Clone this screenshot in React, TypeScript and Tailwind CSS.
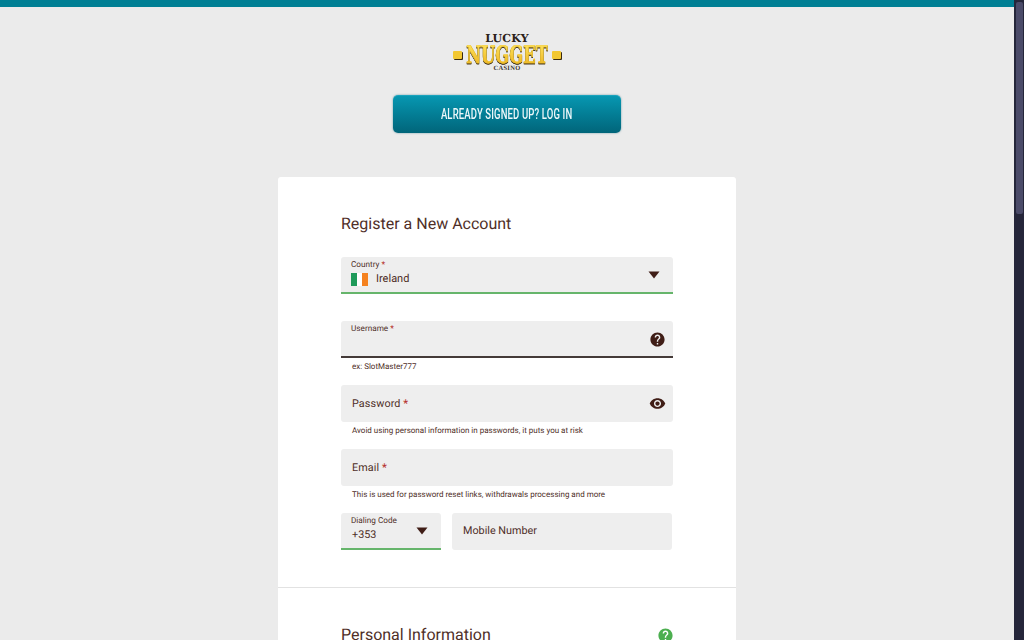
import { ReactNode } from "react";
import { MdHelp, MdVisibility } from "react-icons/md";

const Caret = () => (
  <svg width="12" height="8" viewBox="0 0 12 8" className="shrink-0">
    <polygon points="0.5,0.5 11.5,0.5 6,7.5" fill="#3f1d16" />
  </svg>
);

const Req = () => <span className="font-medium text-[#b5302a]"> *</span>;

const Logo = () => (
  <div className="flex h-[38px] w-[108px] flex-col items-center">
    <div className="h-[10px] font-['DejaVu_Serif'] text-[11px] leading-[10px] font-bold tracking-[0.2px] text-[#2b2118]">
      LUCKY
    </div>
    <div className="flex h-[21px] w-full items-center justify-between">
      <span className="h-[8px] w-[9px] rounded-[1px] bg-[#f2c731] shadow-[1px_1px_0_#3a2a10]" />
      <div className="flex w-[82px] justify-center">
        <span className="shrink-0 scale-x-[0.68] bg-gradient-to-b from-[#fde35a] to-[#eeb51f] bg-clip-text font-['DejaVu_Serif'] text-[24px] leading-[21px] font-bold whitespace-nowrap text-transparent drop-shadow-[0_1.5px_0_#3a2a10] [-webkit-text-stroke:0.5px_#f2c731]">
          NUGGET
        </span>
      </div>
      <span className="h-[8px] w-[9px] rounded-[1px] bg-[#f2c731] shadow-[1px_1px_0_#3a2a10]" />
    </div>
    <div className="mt-[1px] h-[6px] font-['Liberation_Serif'] text-[6.5px] leading-[6px] font-bold tracking-[0.3px] text-[#3a332c]">
      CASINO
    </div>
  </div>
);

type FieldProps = {
  label?: string;
  value?: ReactNode;
  hint?: string;
  right?: ReactNode;
  rightPad?: string;
  border?: string;
};

// filled input, floating label when there is a value or the field is active
const Field = ({ label, value, hint, right, rightPad = "pr-[7px]", border }: FieldProps) => (
  <div className="h-16">
    <div
      className={`flex h-[37px] items-center justify-between rounded-t-[3px] bg-[#eeeeee] pl-[10px] ${rightPad} ${
        border ? `border-b-2 ${border}` : "rounded-b-[3px]"
      }`}
    >
      {value !== undefined ? (
        <div className="flex h-full flex-col pt-[2px]">
          <span className="text-[8.2px] leading-[12px]">
            {label}
            <Req />
          </span>
          <div className="text-[11px] leading-[16px]">{value}</div>
        </div>
      ) : (
        <span className="pt-[1px] pl-[1px] text-[10.8px] tracking-[0.1px]">
          {label}
          <Req />
        </span>
      )}
      {right}
    </div>
    {hint && <p className="mt-[3px] pl-[11px] text-[8px] leading-[12px]">{hint}</p>}
  </div>
);

export default function App() {
  return (
    <div className="flex h-screen overflow-hidden bg-[#ebebeb] font-['Roboto',sans-serif] text-[#4f2f28] [text-rendering:geometricPrecision]">
      <main className="flex min-w-0 flex-1 flex-col items-center">
        <div className="h-[7px] w-full shrink-0 bg-[#007f94]" />
        <div className="mt-[27px] shrink-0">
          <Logo />
        </div>
        <button className="mt-[23px] flex h-[38px] w-[228px] shrink-0 items-center justify-center rounded-[5px] border-t border-[#1ba3bd] bg-gradient-to-b from-[#0797b1] to-[#01657a] shadow-[0_0_2px_rgba(0,90,110,0.6)]">
          <span className="shrink-0 scale-x-[0.68] font-['Roboto'] text-[14px] font-medium tracking-[0.2px] whitespace-nowrap text-[#eef8fa]">
            ALREADY SIGNED UP? LOG IN
          </span>
        </button>
        <section className="mt-[44px] w-[458px] shrink-0 rounded-t-[3px] bg-white">
          <div className="border-b border-[#e2e2e2] px-[63px] pt-[37px] pb-[37px]">
            <h1 className="mb-[23px] text-[16px] leading-[20px] font-normal">Register a New Account</h1>
            <Field
              label="Country"
              border="border-[#66b56b]"
              rightPad="pr-[13px]"
              value={
                <span className="flex items-center gap-[8px]">
                  <span className="flex h-[13px] w-[17px] overflow-hidden">
                    <span className="flex-1 bg-[#1f9a5a]" />
                    <span className="flex-1 bg-white" />
                    <span className="flex-1 bg-[#f58220]" />
                  </span>
                  Ireland
                </span>
              }
              right={<Caret />}
            />
            <Field
              label="Username"
              border="border-[#443a38]"
              value=""
              hint="ex: SlotMaster777"
              right={<MdHelp size={17} className="mt-[1px] shrink-0 text-[#3f1d16]" />}
            />
            <Field
              label="Password"
              hint="Avoid using personal information in passwords, it puts you at risk"
              right={<MdVisibility size={17} className="shrink-0 text-[#3f1d16]" />}
            />
            <Field label="Email" hint="This is used for password reset links, withdrawals processing and more" />
            <div className="flex gap-[11px]">
              <div className="flex h-[37px] w-[100px] items-center justify-between rounded-t-[3px] border-b-2 border-[#66b56b] bg-[#eeeeee] pr-[13px] pl-[10px]">
                <div className="flex h-full flex-col pt-[2px]">
                  <span className="text-[8.2px] leading-[12px]">Dialing Code</span>
                  <span className="pl-[1px] text-[10.8px] leading-[16px]">+353</span>
                </div>
                <Caret />
              </div>
              <div className="flex h-[37px] w-[220px] items-center rounded-[3px] bg-[#eeeeee] pl-[11px] text-[10.8px]">
                Mobile Number
              </div>
            </div>
          </div>
          <div className="flex items-center justify-between pt-[37px] pr-[62px] pl-[63px]">
            <h2 className="text-[16px] leading-[20px] font-normal">Personal Information</h2>
            <MdHelp size={17} className="shrink-0 text-[#4caf50]" />
          </div>
        </section>
      </main>
      <aside className="flex w-[10px] shrink-0 flex-col items-center bg-[#25263a] pt-[2px]">
        <div className="h-[212px] w-[7px] rounded-[2px] bg-[#4b4b69]" />
      </aside>
    </div>
  );
}
